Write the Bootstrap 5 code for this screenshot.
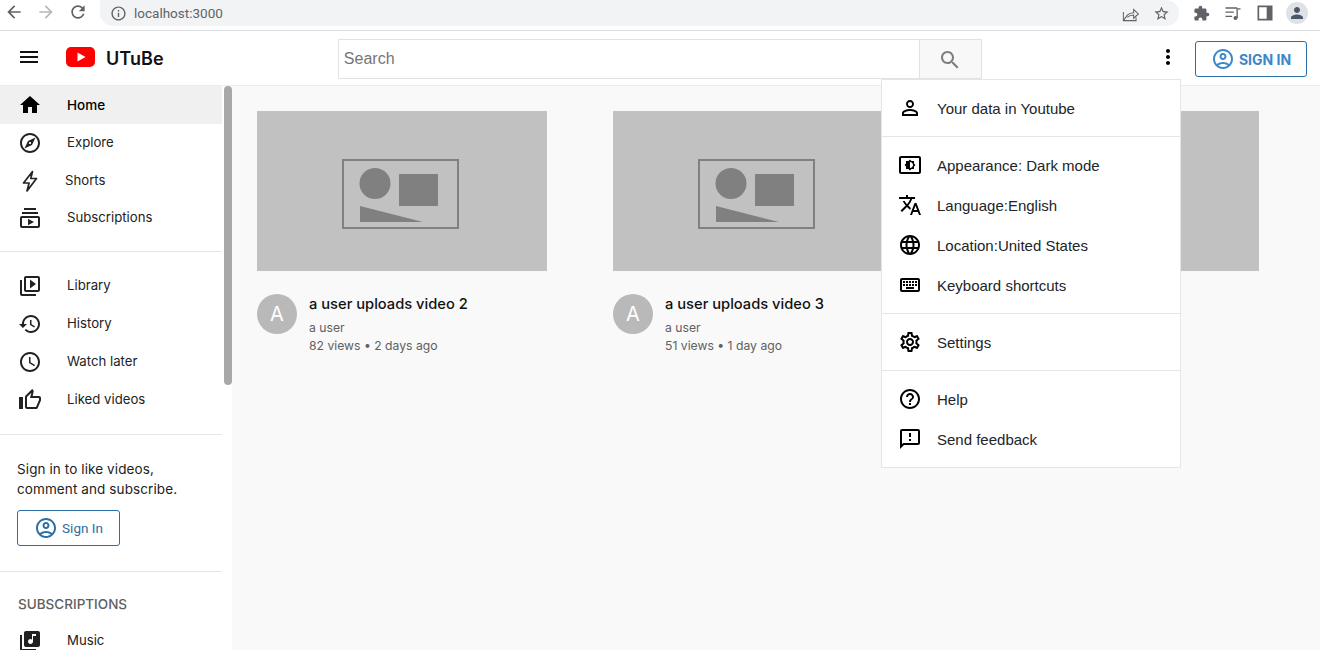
<!DOCTYPE html>
<html lang="en">
<head>
  <meta charset="UTF-8" />
  <meta name="viewport" content="width=device-width, initial-scale=1.0"/>
  <title>UTuBe</title>
  <link href="https://cdn.jsdelivr.net/npm/bootstrap@5.3.0/dist/css/bootstrap.min.css" rel="stylesheet"/>
  <style>
    html, body { height: 650px; overflow: hidden; }
    body { font-family: Inter, "Liberation Sans", sans-serif; background: #f9f9f9; color: #111; }
    svg.ico { width: 24px; height: 24px; fill: currentColor; flex: none; }

    /* browser bar */
    .chrome-bar { height: 31px; background: #fff; border-bottom: 1px solid #dadce0; padding-left: 4px; }
    svg.chrome-btn { width: 20px; height: 20px; color: #5f6368; margin: 2px 12px 0 0; }
    svg.chrome-btn.off { color: #b6b8ba; }
    .omni { width: 1079px; height: 26px; background: #f1f3f4; border-radius: 0 13px 13px 13px; padding: 0 9px 0 10px; font: 13.5px Roboto, "Liberation Sans", sans-serif; color: #5f6368; gap: 7px; }
    .omni svg { width: 17px; height: 17px; fill: #5f6368; }
    .omni svg.share-ico { width: 19px; height: 19px; margin-right: -2px; }
    .chrome-tools { margin-left: 12px; gap: 12px; height: 26px; color: #5f6368; }
    .chrome-tools svg { width: 20px; height: 20px; }
    .chrome-tools svg.ext-ico { width: 17px; height: 17px; margin: 0 1px 0 2px; }
    .chrome-avatar { width: 22px; height: 22px; border-radius: 50%; background: #dee1e6; margin-left: -1px; }
    .chrome-avatar svg { width: 18px; height: 18px; fill: #4a5568; }

    /* app header */
    .app-head { height: 55px; background: #fff; border-bottom: 1px solid #ececec; padding: 0 13px 0 17px; }
    .head-up { margin-bottom: 2px; }
    .logo-mark { margin-left: 25px; }
    .brand-name { font-size: 18px; font-weight: 600; color: #111; margin-left: 11px; letter-spacing: .1px; }
    .search-box { width: 644px; height: 40px; margin-left: 174px; margin-top: 2px; }
    .search-box .form-control { border-radius: 0; border-color: #e2e2e2; font: 16px "Liberation Sans", sans-serif; padding: 0 5px; height: 40px; }
    .search-box .form-control::placeholder { color: #757575; }
    .search-btn { width: 63px; background: #f8f8f8; border: 1px solid #e2e2e2; border-radius: 0; color: #7d7d7d; padding: 0; }
    .more-btn { margin-left: auto; margin-right: 15px; margin-bottom: 2px; color: #000; }
    .sign-btn { width: 112px; height: 36px; border: 1px solid #2c6ea6; border-radius: 3px; color: #3b87c9; font-size: 14px; font-weight: 700; padding: 0; background: #fff; margin-top: 2px; }
    .sign-btn:hover { color: #3b87c9; border-color: #2c6ea6; }

    /* sidebar */
    .page-body { height: 564px; }
    .side-wrap { width: 232px; background: #fff; flex: none; position: relative; overflow: hidden; }
    .side-thumb { position: absolute; left: 224px; top: 0; width: 8px; height: 299px; background: #a8a8a8; border-radius: 4px; }
    .side-list { width: 222px; }
    .side-sec { border-bottom: 1px solid #e6e6e6; }
    .side-row { height: 38px; padding-left: 18px; font-size: 13.2px; color: #222; text-decoration: none; }
    .side-row:hover { color: #222; }
    .side-row svg { margin-right: 25px; }
    .side-row.on { background: #f0f0f0; color: #000; font-weight: 500; font-size: 13.5px; }
    .side-row.bolt svg { margin-right: 23px; }
    .side-row.tight { height: 37px; }
    .sec-top { height: 166px; }
    .sec-lib { height: 183px; padding-top: 15px; }
    .sec-sign { height: 137px; padding: 24px 17px 0; font-size: 13.5px; letter-spacing: .1px; line-height: 20px; color: #222; }
    .sign-small { width: 103px; height: 36px; margin-top: 11px; border: 1px solid #2c6ea6; border-radius: 3px; color: #2c6ea6; font: 13.5px Roboto, "Liberation Sans", sans-serif; background: #fff; padding: 0; }
    .sign-small:hover { color: #2c6ea6; border-color: #2c6ea6; }
    .sub-head { font-size: 13.5px; font-weight: 500; color: #606060; padding: 24px 18px 10px; line-height: 16px; }

    /* videos */
    .vid-area { gap: 66px; padding: 25px 0 0 25px; }
    .vid-item { width: 290px; }
    .vid-thumb { display: block; width: 290px; height: 160px; }
    .vid-avatar { width: 40px; height: 40px; border-radius: 50%; background: #b9b9b9; color: #fff; font-size: 20px; margin-right: 12px; flex: none; }
    .vid-meta { margin-top: 23px; }
    .vid-title { font-size: 14.7px; font-weight: 500; color: #111; line-height: 20px; }
    .vid-sub { font-size: 12.2px; color: #606060; line-height: 18px; }
    .vid-sub.first { margin-top: 5px; }

    /* menu */
    .more-menu { position: absolute; left: 881px; top: 79px; width: 300px; background: #fff; border: 1px solid #e5e5e5; border-radius: 0; font: 15px "Liberation Sans", sans-serif; color: #1a1a1a; }
    .more-menu .list-group-item { padding: 8px 0; border-color: #e5e5e5; background: transparent; }
    .menu-row { height: 40px; padding-left: 16px; }
    .menu-row svg { margin-right: 15px; color: #000; }
  </style>
</head>
<body>
  <svg width="0" height="0" class="d-block position-absolute">
    <defs>
      <symbol id="i-back" viewBox="0 0 24 24"><path d="M20 11H7.83l5.59-5.59L12 4l-8 8 8 8 1.41-1.41L7.83 13H20v-2z"/></symbol>
      <symbol id="i-forward" viewBox="0 0 24 24"><path d="M4 11h12.17l-5.59-5.59L12 4l8 8-8 8-1.41-1.41L16.17 13H4v-2z"/></symbol>
      <symbol id="i-reload" viewBox="0 0 24 24"><path d="M17.65 6.35C16.2 4.9 14.21 4 12 4c-4.42 0-7.99 3.58-7.99 8s3.57 8 7.99 8c3.73 0 6.84-2.55 7.73-6h-2.08c-.82 2.33-3.04 4-5.65 4-3.31 0-6-2.69-6-6s2.69-6 6-6c1.66 0 3.14.69 4.22 1.78L13 11h7V4l-2.35 2.35z"/></symbol>
      <symbol id="i-info" viewBox="0 0 24 24"><path d="M11 7h2v2h-2zm0 4h2v6h-2zm1-9C6.48 2 2 6.48 2 12s4.48 10 10 10 10-4.48 10-10S17.52 2 12 2zm0 18c-4.41 0-8-3.59-8-8s3.59-8 8-8 8 3.59 8 8-3.59 8-8 8z"/></symbol>
      <symbol id="i-star" viewBox="0 0 24 24"><path d="M22 9.24l-7.19-.62L12 2 9.19 8.63 2 9.24l5.46 4.73L5.82 21 12 17.27 18.18 21l-1.63-7.03L22 9.24zM12 15.4l-3.76 2.27 1-4.28-3.32-2.88 4.38-.38L12 6.1l1.71 4.04 4.38.38-3.32 2.88 1 4.28L12 15.4z"/></symbol>
      <symbol id="i-ext" viewBox="0 0 24 24"><path d="M20.5 11H19V7c0-1.1-.9-2-2-2h-4V3.5C13 2.12 11.88 1 10.5 1S8 2.12 8 3.5V5H4c-1.1 0-1.99.9-1.99 2v3.8H3.5c1.49 0 2.7 1.21 2.7 2.7s-1.21 2.7-2.7 2.7H2V20c0 1.1.9 2 2 2h3.8v-1.5c0-1.49 1.21-2.7 2.7-2.7 1.49 0 2.7 1.21 2.7 2.7V22H17c1.1 0 2-.9 2-2v-4h1.5c1.38 0 2.5-1.12 2.5-2.5S21.88 11 20.5 11z"/></symbol>
      <symbol id="i-person" viewBox="0 0 24 24"><path d="M12 12c2.21 0 4-1.79 4-4s-1.79-4-4-4-4 1.79-4 4 1.79 4 4 4zm0 2c-2.67 0-8 1.34-8 4v2h16v-2c0-2.66-5.33-4-8-4z"/></symbol>
      <symbol id="i-menu" viewBox="0 0 24 24"><path d="M3 18h18v-2H3v2zm0-5h18v-2H3v2zm0-7v2h18V6H3z"/></symbol>
      <symbol id="i-search" viewBox="0 0 24 24"><path d="M15.5 14h-.79l-.28-.27C15.41 12.59 16 11.11 16 9.5 16 5.91 13.09 3 9.5 3S3 5.91 3 9.5 5.91 16 9.5 16c1.61 0 3.09-.59 4.23-1.57l.27.28v.79l5 4.99L20.49 19l-4.99-5zm-6 0C7.01 14 5 11.99 5 9.5S7.01 5 9.5 5 14 7.01 14 9.5 11.99 14 9.5 14z"/></symbol>
      <symbol id="i-more" viewBox="0 0 24 24"><path d="M12 8c1.1 0 2-.9 2-2s-.9-2-2-2-2 .9-2 2 .9 2 2 2zm0 2c-1.1 0-2 .9-2 2s.9 2 2 2 2-.9 2-2-.9-2-2-2zm0 6c-1.1 0-2 .9-2 2s.9 2 2 2 2-.9 2-2-.9-2-2-2z"/></symbol>
      <symbol id="i-account" viewBox="0 0 24 24"><path d="M12 2C6.48 2 2 6.48 2 12s4.48 10 10 10 10-4.48 10-10S17.52 2 12 2zM7.35 18.5C8.66 17.56 10.26 17 12 17s3.34.56 4.65 1.5c-1.31.94-2.91 1.5-4.65 1.5s-3.34-.56-4.65-1.5zm10.79-1.38C16.45 15.8 14.32 15 12 15s-4.45.8-6.14 2.12C4.7 15.73 4 13.95 4 12c0-4.42 3.58-8 8-8s8 3.58 8 8c0 1.95-.7 3.73-1.86 5.12zM12 6c-1.93 0-3.5 1.57-3.5 3.5S10.07 13 12 13s3.5-1.57 3.5-3.5S13.93 6 12 6zm0 5c-.83 0-1.5-.67-1.5-1.5S11.17 8 12 8s1.5.67 1.5 1.5S12.83 11 12 11z"/></symbol>
      <symbol id="i-home" viewBox="0 0 24 24"><path d="M10 20v-6h4v6h5v-8h3L12 3 2 12h3v8z"/></symbol>
      <symbol id="i-explore" viewBox="0 0 24 24"><path d="M12 2C6.48 2 2 6.48 2 12s4.48 10 10 10 10-4.48 10-10S17.52 2 12 2zm0 18c-4.41 0-8-3.59-8-8s3.59-8 8-8 8 3.59 8 8-3.59 8-8 8zm-5.5-2.5l7.51-3.49L17.5 6.5 9.99 9.99 6.5 17.5zm5.5-6.6c.61 0 1.1.49 1.1 1.1s-.49 1.1-1.1 1.1-1.1-.49-1.1-1.1.49-1.1 1.1-1.1z"/></symbol>
      <symbol id="i-bolt" viewBox="0 0 24 24"><path d="M14.5 2.5 5.5 14h5.6L9 22l9.5-12.500h-5.700z" fill="none" stroke="currentColor" stroke-width="1.700" stroke-linejoin="round"/></symbol>
      <symbol id="i-subs" viewBox="0 0 24 24"><path d="M20 8H4V6h16v2zm-2-6H6v2h12V2zm4 10v8c0 1.1-.9 2-2 2H4c-1.1 0-2-.9-2-2v-8c0-1.1.9-2 2-2h16c1.1 0 2 .9 2 2zm-2 0H4v8h16v-8zm-10 .73v6.53L16 16l-6-3.27z"/></symbol>
      <symbol id="i-library" viewBox="0 0 24 24"><path d="M4 6H2v14c0 1.1.9 2 2 2h14v-2H4V6zm16-4H8c-1.1 0-2 .9-2 2v12c0 1.1.9 2 2 2h12c1.1 0 2-.9 2-2V4c0-1.1-.9-2-2-2zm0 14H8V4h12v12zM12 5.5v9l6-4.5z"/></symbol>
      <symbol id="i-history" viewBox="0 0 24 24"><path d="M13 3c-4.97 0-9 4.03-9 9H1l3.89 3.89.07.14L9 12H6c0-3.87 3.13-7 7-7s7 3.13 7 7-3.13 7-7 7c-1.93 0-3.68-.79-4.94-2.06l-1.42 1.42C8.27 19.99 10.51 21 13 21c4.97 0 9-4.03 9-9s-4.03-9-9-9zm-1 5v5l4.28 2.54.72-1.21-3.5-2.08V8H12z"/></symbol>
      <symbol id="i-clock" viewBox="0 0 24 24"><path d="M11.99 2C6.47 2 2 6.48 2 12s4.47 10 9.99 10C17.52 22 22 17.52 22 12S17.52 2 11.99 2zM12 20c-4.42 0-8-3.58-8-8s3.58-8 8-8 8 3.58 8 8-3.58 8-8 8zm.5-13H11v6l5.25 3.15.75-1.23-4.5-2.67z"/></symbol>
      <symbol id="i-thumb" viewBox="0 0 24 24"><path d="M9 21h9c.83 0 1.54-.5 1.84-1.22l3.02-7.05c.09-.23.14-.47.14-.73v-2c0-1.1-.9-2-2-2h-6.31l.95-4.57.03-.32c0-.41-.17-.79-.44-1.06L14.17 1 7.58 7.59C7.22 7.95 7 8.45 7 9v10c0 1.1.9 2 2 2zM9 9l4.34-4.34L12 10h9v2l-3 7H9V9zM1 9h4v12H1z"/></symbol>
      <symbol id="i-music" viewBox="0 0 24 24"><path d="M20 2H8c-1.1 0-2 .9-2 2v12c0 1.1.9 2 2 2h12c1.1 0 2-.9 2-2V4c0-1.1-.9-2-2-2zm-2 5h-3v5.5c0 1.38-1.12 2.5-2.5 2.5S10 13.88 10 12.5s1.12-2.5 2.5-2.5c.57 0 1.08.19 1.5.51V5h4v2zM4 6H2v14c0 1.1.9 2 2 2h14v-2H4V6z"/></symbol>
      <symbol id="i-outline-person" viewBox="0 0 24 24"><path d="M12 5.9c1.16 0 2.1.94 2.1 2.1s-.94 2.1-2.1 2.1S9.9 9.16 9.9 8s.94-2.1 2.1-2.1m0 9c2.97 0 6.1 1.46 6.1 2.1v1.1H5.9V17c0-.64 3.13-2.1 6.1-2.1M12 4C9.79 4 8 5.79 8 8s1.79 4 4 4 4-1.79 4-4-1.79-4-4-4zm0 9c-2.67 0-8 1.34-8 4v3h16v-3c0-2.66-5.33-4-8-4z"/></symbol>
      <symbol id="i-bright" viewBox="0 0 24 24"><path d="M21 3H3c-1.1 0-2 .9-2 2v14c0 1.1.9 2 2 2h18c1.1 0 2-.9 2-2V5c0-1.1-.9-2-2-2zm0 16.01H3V4.99h18v14.02zM8 16h2.5l1.5 1.5 1.5-1.5H16v-2.5l1.5-1.5-1.5-1.5V8h-2.5L12 6.5 10.5 8H8v2.5L6.5 12 8 13.5V16zm4-7c1.66 0 3 1.34 3 3s-1.34 3-3 3V9z"/></symbol>
      <symbol id="i-translate" viewBox="0 0 24 24"><path d="M12.87 15.07l-2.54-2.51.03-.03c1.74-1.94 2.98-4.17 3.71-6.53H17V4h-7V2H8v2H1v1.99h11.17C11.5 7.92 10.44 9.75 9 11.35 8.07 10.32 7.3 9.19 6.69 8h-2c.73 1.63 1.73 3.17 2.98 4.56l-5.09 5.02L4 19l5-5 3.11 3.11.76-2.04zM18.5 10h-2L12 22h2l1.12-3h4.75L21 22h2l-4.5-12zm-2.62 7l1.62-4.33L19.12 17h-3.24z"/></symbol>
      <symbol id="i-globe" viewBox="0 0 24 24"><path d="M11.99 2C6.47 2 2 6.48 2 12s4.47 10 9.99 10C17.52 22 22 17.52 22 12S17.52 2 11.99 2zm6.93 6h-2.95c-.32-1.25-.78-2.45-1.38-3.56 1.84.63 3.37 1.91 4.33 3.56zM12 4.04c.83 1.2 1.48 2.53 1.91 3.96h-3.82c.43-1.43 1.08-2.76 1.91-3.96zM4.26 14C4.1 13.36 4 12.69 4 12s.1-1.36.26-2h3.38c-.08.66-.14 1.32-.14 2 0 .68.06 1.34.14 2H4.26zm.82 2h2.95c.32 1.25.78 2.45 1.38 3.56-1.84-.63-3.37-1.9-4.33-3.56zm2.95-8H5.08c.96-1.66 2.49-2.93 4.33-3.56C8.81 5.55 8.35 6.75 8.03 8zM12 19.96c-.83-1.2-1.48-2.53-1.91-3.96h3.82c-.43 1.43-1.08 2.76-1.91 3.96zM14.34 14H9.66c-.09-.66-.16-1.32-.16-2 0-.68.07-1.35.16-2h4.68c.09.65.16 1.32.16 2 0 .68-.07 1.34-.16 2zm.25 5.56c.6-1.11 1.06-2.31 1.38-3.56h2.95c-.96 1.65-2.49 2.93-4.33 3.56zM16.36 14c.08-.66.14-1.32.14-2 0-.68-.06-1.34-.14-2h3.38c.16.64.26 1.31.26 2s-.1 1.36-.26 2h-3.38z"/></symbol>
      <symbol id="i-keys" viewBox="0 0 24 24"><path d="M20 7v10H4V7h16m0-2H4c-1.1 0-1.99.9-1.99 2L2 17c0 1.1.9 2 2 2h16c1.1 0 2-.9 2-2V7c0-1.1-.9-2-2-2zm-9 3h2v2h-2zm0 3h2v2h-2zM8 8h2v2H8zm0 3h2v2H8zm-3 0h2v2H5zm0-3h2v2H5zm3 6h8v2H8zm6-3h2v2h-2zm0-3h2v2h-2zm3 3h2v2h-2zm0-3h2v2h-2z"/></symbol>
      <symbol id="i-gear" viewBox="0 0 24 24"><path d="M19.43 12.98c.04-.32.07-.64.07-.98 0-.34-.03-.66-.07-.98l2.11-1.65c.19-.15.24-.42.12-.64l-2-3.46c-.09-.16-.26-.25-.44-.25-.06 0-.12.01-.17.03l-2.49 1c-.52-.4-1.08-.73-1.69-.98l-.38-2.65C14.46 2.18 14.25 2 14 2h-4c-.25 0-.46.18-.49.42l-.38 2.65c-.61.25-1.17.59-1.69.98l-2.49-1c-.06-.02-.12-.03-.18-.03-.17 0-.34.09-.43.25l-2 3.46c-.13.22-.07.49.12.64l2.11 1.65c-.04.32-.07.65-.07.98 0 .33.03.66.07.98l-2.11 1.65c-.19.15-.24.42-.12.64l2 3.46c.09.16.26.25.44.25.06 0 .12-.01.17-.03l2.49-1c.52.4 1.08.73 1.69.98l.38 2.65c.03.24.24.42.49.42h4c.25 0 .46-.18.49-.42l.38-2.65c.61-.25 1.17-.59 1.69-.98l2.49 1c.06.02.12.03.18.03.17 0 .34-.09.43-.25l2-3.46c.12-.22.07-.49-.12-.64l-2.11-1.65zm-1.98-1.71c.04.31.05.52.05.73 0 .21-.02.43-.05.73l-.14 1.13.89.7 1.08.84-.7 1.21-1.27-.51-1.04-.42-.9.68c-.43.32-.84.56-1.25.73l-1.06.43-.16 1.13-.2 1.35h-1.4l-.19-1.35-.16-1.13-1.06-.43c-.43-.18-.83-.41-1.23-.71l-.91-.7-1.06.43-1.27.51-.7-1.21 1.08-.84.89-.7-.14-1.13c-.03-.31-.05-.54-.05-.74s.02-.43.05-.73l.14-1.13-.89-.7-1.08-.84.7-1.21 1.27.51 1.04.42.9-.68c.43-.32.84-.56 1.25-.73l1.06-.43.16-1.13.2-1.35h1.39l.19 1.35.16 1.13 1.06.43c.43.18.83.41 1.23.71l.91.7 1.06-.43 1.27-.51.7 1.21-1.07.85-.89.7.14 1.13zM12 8c-2.21 0-4 1.79-4 4s1.79 4 4 4 4-1.79 4-4-1.79-4-4-4zm0 6c-1.1 0-2-.9-2-2s.9-2 2-2 2 .9 2 2-.9 2-2 2z"/></symbol>
      <symbol id="i-help" viewBox="0 0 24 24"><path d="M11 18h2v-2h-2v2zm1-16C6.48 2 2 6.48 2 12s4.48 10 10 10 10-4.48 10-10S17.52 2 12 2zm0 18c-4.41 0-8-3.59-8-8s3.59-8 8-8 8 3.59 8 8-3.59 8-8 8zm0-14c-2.21 0-4 1.79-4 4h2c0-1.1.9-2 2-2s2 .9 2 2c0 2-3 1.75-3 5h2c0-2.25 3-2.5 3-5 0-2.21-1.79-4-4-4z"/></symbol>
      <symbol id="i-feedback" viewBox="0 0 24 24"><path d="M20 2H4c-1.1 0-1.99.9-1.99 2L2 22l4-4h14c1.1 0 2-.9 2-2V4c0-1.1-.9-2-2-2zm0 14H5.17L4 17.17V4h16v12zm-9-4h2v2h-2zm0-6h2v4h-2z"/></symbol>
      <symbol id="thumb-art" viewBox="0 0 290 160">
        <rect width="290" height="160" fill="#c1c1c1"/>
        <rect x="86" y="49" width="115" height="68" fill="none" stroke="#808080" stroke-width="2"/>
        <circle cx="118" cy="72.500" r="15.500" fill="#808080"/>
        <rect x="142" y="63" width="39" height="32" fill="#808080"/>
        <path d="M103 95v16h63z" fill="#808080"/>
      </symbol>
    </defs>
  </svg>

  <!-- browser bar -->
  <div class="chrome-bar d-flex align-items-start">
    <svg class="ico chrome-btn"><use href="#i-back"/></svg>
    <svg class="ico chrome-btn off"><use href="#i-forward"/></svg>
    <svg class="ico chrome-btn"><use href="#i-reload"/></svg>
    <div class="omni d-flex align-items-center">
      <svg class="ico"><use href="#i-info"/></svg>
      <span>localhost:3000</span>
      <svg class="ico share-ico ms-auto" viewBox="0 0 24 24"><path d="M3 10v11h16v-4M3 21l5-7c2-2 5-3 8-3V7l6 5.500-6 5.500v-4c-3 0-6 1-8 3" fill="none" stroke="#5f6368" stroke-width="1.300"/></svg>
      <svg class="ico ms-2"><use href="#i-star"/></svg>
    </div>
    <div class="chrome-tools d-flex align-items-center">
      <svg class="ico ext-ico"><use href="#i-ext"/></svg>
      <svg class="ico" viewBox="0 0 24 24"><path d="M3 6h14M3 11h10M3 16h8M17 18V7h4" fill="none" stroke="currentColor" stroke-width="1.600"/><circle cx="15" cy="18" r="2.400"/></svg>
      <svg class="ico" viewBox="0 0 24 24"><path d="M4 4h16v16H4z" fill="none" stroke="currentColor" stroke-width="2"/><path d="M14 4h6v16h-6z"/></svg>
      <div class="chrome-avatar d-flex align-items-center justify-content-center"><svg class="ico"><use href="#i-person"/></svg></div>
    </div>
  </div>

  <!-- app header -->
  <nav class="app-head d-flex align-items-center">
    <svg class="ico head-up"><use href="#i-menu"/></svg>
    <svg class="logo-mark head-up" width="29" height="20" viewBox="0 0 29 20"><rect width="29" height="20" rx="5" fill="#f00"/><path d="M11.500 5.500v9l8-4.500z" fill="#fff"/></svg>
    <span class="brand-name">UTuBe</span>
    <form class="search-box input-group flex-nowrap">
      <input type="text" class="form-control shadow-none" placeholder="Search"/>
      <button class="btn search-btn" type="button"><svg class="ico"><use href="#i-search"/></svg></button>
    </form>
    <svg class="ico more-btn"><use href="#i-more"/></svg>
    <button class="btn sign-btn d-flex align-items-center justify-content-center gap-1"><svg class="ico"><use href="#i-account"/></svg>SIGN IN</button>
  </nav>

  <div class="page-body d-flex">
    <aside class="side-wrap">
      <div class="side-list">
        <div class="side-sec sec-top">
          <a href="#" class="side-row on d-flex align-items-center"><svg class="ico"><use href="#i-home"/></svg>Home</a>
          <a href="#" class="side-row d-flex align-items-center"><svg class="ico"><use href="#i-explore"/></svg>Explore</a>
          <a href="#" class="side-row tight bolt d-flex align-items-center"><svg class="ico"><use href="#i-bolt"/></svg>Shorts</a>
          <a href="#" class="side-row tight d-flex align-items-center"><svg class="ico"><use href="#i-subs"/></svg>Subscriptions</a>
        </div>
        <div class="side-sec sec-lib">
          <a href="#" class="side-row d-flex align-items-center"><svg class="ico"><use href="#i-library"/></svg>Library</a>
          <a href="#" class="side-row d-flex align-items-center"><svg class="ico"><use href="#i-history"/></svg>History</a>
          <a href="#" class="side-row d-flex align-items-center"><svg class="ico"><use href="#i-clock"/></svg>Watch later</a>
          <a href="#" class="side-row d-flex align-items-center"><svg class="ico"><use href="#i-thumb"/></svg>Liked videos</a>
        </div>
        <div class="side-sec sec-sign">
          Sign in to like videos,<br/>comment and subscribe.
          <button class="btn sign-small d-flex align-items-center justify-content-center gap-1"><svg class="ico"><use href="#i-account"/></svg>Sign In</button>
        </div>
        <div class="sub-head">SUBSCRIPTIONS</div>
        <a href="#" class="side-row d-flex align-items-center"><svg class="ico"><use href="#i-music"/></svg>Music</a>
      </div>
      <div class="side-thumb"></div>
    </aside>

    <main class="vid-area d-flex flex-grow-1 align-items-start" id="videos"></main>
  </div>

  <!-- settings menu -->
  <div class="more-menu list-group list-group-flush">
    <div class="list-group-item">
      <div class="menu-row d-flex align-items-center"><svg class="ico"><use href="#i-outline-person"/></svg>Your data in Youtube</div>
    </div>
    <div class="list-group-item">
      <div class="menu-row d-flex align-items-center"><svg class="ico"><use href="#i-bright"/></svg>Appearance: Dark mode</div>
      <div class="menu-row d-flex align-items-center"><svg class="ico"><use href="#i-translate"/></svg>Language:English</div>
      <div class="menu-row d-flex align-items-center"><svg class="ico"><use href="#i-globe"/></svg>Location:United States</div>
      <div class="menu-row d-flex align-items-center"><svg class="ico"><use href="#i-keys"/></svg>Keyboard shortcuts</div>
    </div>
    <div class="list-group-item">
      <div class="menu-row d-flex align-items-center"><svg class="ico"><use href="#i-gear"/></svg>Settings</div>
    </div>
    <div class="list-group-item">
      <div class="menu-row d-flex align-items-center"><svg class="ico"><use href="#i-help"/></svg>Help</div>
      <div class="menu-row d-flex align-items-center"><svg class="ico"><use href="#i-feedback"/></svg>Send feedback</div>
    </div>
  </div>

  <script src="https://cdn.jsdelivr.net/npm/bootstrap@5.3.0/dist/js/bootstrap.bundle.min.js"></script>
  <script>
    const videos = [
      { title: 'a user uploads video 2', stats: '82 views • 2 days ago' },
      { title: 'a user uploads video 3', stats: '51 views • 1 day ago' },
      { title: 'a user uploads video 4', stats: '12 views • 1 day ago' }
    ];

    document.getElementById('videos').innerHTML = videos.map(v => `
      <div class="vid-item">
        <svg class="vid-thumb"><use href="#thumb-art"/></svg>
        <div class="vid-meta d-flex">
          <div class="vid-avatar d-flex align-items-center justify-content-center">A</div>
          <div>
            <div class="vid-title">${v.title}</div>
            <div class="vid-sub first">a user</div>
            <div class="vid-sub">${v.stats}</div>
          </div>
        </div>
      </div>`).join('');
  </script>
</body>
</html>
